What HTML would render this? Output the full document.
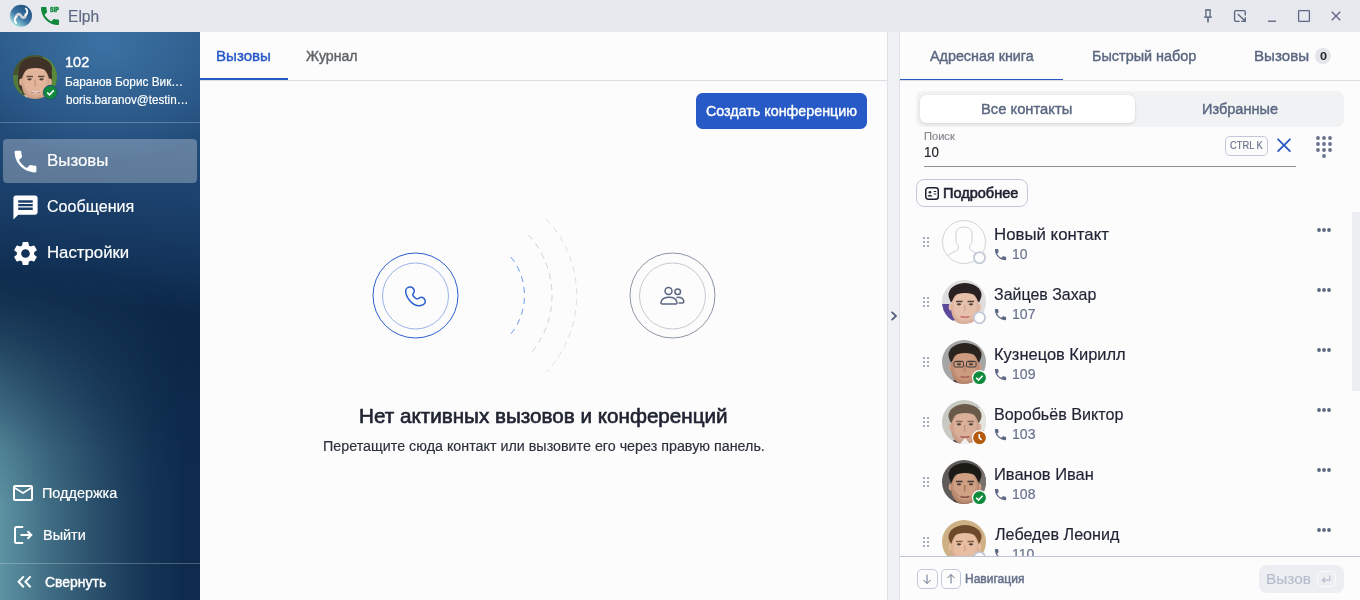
<!DOCTYPE html>
<html lang="ru">
<head>
<meta charset="utf-8">
<title>Elph</title>
<style>
*{box-sizing:border-box;margin:0;padding:0}
html,body{width:1360px;height:600px;overflow:hidden;background:#fcfcfc;font-family:"Liberation Sans",sans-serif;color:#22252b}
.a{position:absolute}
.t{position:absolute;white-space:nowrap;line-height:1;transform-origin:0 50%}
#titlebar{position:absolute;left:0;top:0;width:1360px;height:32px;background:#e8e9ee}
#sidebar{position:absolute;left:0;top:32px;width:200px;height:568px;overflow:hidden;
background:
radial-gradient(ellipse 150px 120px at 105px 10px, rgba(60,115,165,.95), rgba(60,115,165,0) 100%),
linear-gradient(186deg,#2a5886 0%,#214a78 21%,#173a63 35%,#0c2849 48%,#0c2849 56%,#0e2b4e 75%,#0e2b4e 100%)}
#main{position:absolute;left:200px;top:32px;width:687px;height:568px;background:#fcfcfc}
#split{position:absolute;left:887px;top:32px;width:13px;height:568px;background:#f0f1f4;border-left:1px solid #dfe1e9;border-right:1px solid #dfe1e9}
#right{position:absolute;left:900px;top:32px;width:460px;height:568px;background:#fcfcfd}
#list{position:absolute;left:900px;top:208px;width:460px;height:348px;overflow:hidden}
#glow{position:absolute;left:0;top:32px;width:200px;height:568px;background:linear-gradient(90deg,rgba(100,156,170,.92) 0,rgba(100,156,170,.58) 50px,rgba(100,156,170,.3) 100px,rgba(100,156,170,.08) 150px,rgba(100,156,170,0) 185px);-webkit-mask-image:linear-gradient(180deg,transparent 240px,rgba(0,0,0,.1) 270px,rgba(0,0,0,.25) 308px,rgba(0,0,0,.55) 368px,rgba(0,0,0,.84) 418px,#000 475px);mask-image:linear-gradient(180deg,transparent 240px,rgba(0,0,0,.1) 270px,rgba(0,0,0,.25) 308px,rgba(0,0,0,.55) 368px,rgba(0,0,0,.84) 418px,#000 475px)}
.sep{position:absolute;left:0;width:200px;height:1px;background:rgba(255,255,255,.24)}
.kb{position:absolute;border:1px solid #c3c9d9;border-radius:5px}
</style>
</head>
<body>
<div id="titlebar"></div>
<div id="sidebar"></div>
<div id="main"></div>
<div id="split"></div>
<div id="right"></div>
<svg class="a" style="left:9px;top:4px" width="24" height="24" viewBox="0 0 24 24" ><defs><linearGradient id="lg" x1="0.85" y1="0.1" x2="0.2" y2="0.95"><stop offset="0" stop-color="#1f4f80"/><stop offset=".55" stop-color="#3d76a4"/><stop offset="1" stop-color="#a6e6e4"/></linearGradient></defs>
<circle cx="12" cy="11.800" r="11" fill="url(#lg)"/>
<path d="M7.300 12.900C8 9.300 11 9.300 12 11.800S16 14.500 16.700 10.700" fill="none" stroke="#cdd3d9" stroke-width="2.700" stroke-linecap="round"/>
<path d="M16.900 4.600C18.700 6.200 18.900 9 16.800 10.900" fill="none" stroke="#fff" stroke-width="1.900" stroke-linecap="round"/>
<path d="M7.100 19C5.300 17.400 5.100 14.600 7.200 12.700" fill="none" stroke="#fff" stroke-width="1.900" stroke-linecap="round"/></svg>
<svg class="a" style="left:37.8px;top:4px" width="24" height="24" viewBox="0 0 24 24" ><path d="M6.620 10.790c1.440 2.830 3.760 5.140 6.590 6.590l2.200-2.200c.27-.27.670-.36 1.020-.24 1.120.37 2.330.57 3.570.57.550 0 1 .45 1 1V20c0 .550-.45 1-1 1-9.390 0-17-7.610-17-17 0-.55.450-1 1-1h3.500c.55 0 1 .45 1 1 0 1.250.200 2.450.57 3.570.110.350.030.740-.25 1.020l-2.200 2.200z" fill="#0f8a3c"/></svg>
<svg class="a" style="left:1200px;top:8px" width="16" height="16" viewBox="0 0 16 16" fill="none" stroke="#5b6780" stroke-width="1.300"><path d="M5.100 2H10.900" stroke-width="1.600"/><path d="M5.900 2.500V8.300M10.100 2.500V8.300" stroke-width="1.300"/><path d="M4.200 9.100H11.800" stroke-width="1.600"/><path d="M8 10V14.400" stroke-width="1.600"/></svg>
<svg class="a" style="left:1232px;top:8px" width="16" height="16" viewBox="0 0 16 16" fill="none" stroke="#5b6780" stroke-width="1.300"><path d="M13.300 7.600V3.900c0-.7-.6-1.300-1.300-1.300H3.900c-.7 0-1.300.6-1.300 1.300v8.100c0 .7.600 1.300 1.300 1.300H7.700M9.200 13.300H13.300V9.200M5.800 5.900L13.100 13.100" stroke-width="1.350"/></svg>
<svg class="a" style="left:1264px;top:8px" width="16" height="16" viewBox="0 0 16 16" fill="none" stroke="#5b6780" stroke-width="1.300"><path d="M4 13.200h8" stroke-width="1.400"/></svg>
<svg class="a" style="left:1296px;top:8px" width="16" height="16" viewBox="0 0 16 16" fill="none" stroke="#5b6780" stroke-width="1.300"><rect x="2.600" y="2.600" width="10.800" height="10.800" rx=".6"/></svg>
<svg class="a" style="left:1328px;top:8px" width="16" height="16" viewBox="0 0 16 16" fill="none" stroke="#5b6780" stroke-width="1.300"><path d="M3.800 3.800l8.400 8.400M12.200 3.800l-8.400 8.400"/></svg>
<div id="glow"></div>
<svg class="a" style="left:13px;top:55px" width="46" height="46" viewBox="0 0 46 46" ><defs><clipPath id="c0"><circle cx="22" cy="22" r="22"/></clipPath><filter id="f0" x="-10%" y="-10%" width="120%" height="120%"><feGaussianBlur stdDeviation=".75"/></filter><radialGradient id="g0" cx=".5" cy=".42" r=".62"><stop offset="0" stop-color="#e2b59b"/><stop offset=".6" stop-color="#e2b59b"/><stop offset="1" stop-color="#c08f78"/></radialGradient></defs>
<g clip-path="url(#c0)"><rect width="44" height="44" fill="#47552f"/><g filter="url(#f0)"><rect x="30" y="2" width="14" height="36" fill="#5b8a3c"/><rect x="0" y="20" width="9" height="24" fill="#557a3c"/><ellipse cx="9.500" cy="24" rx="4.500" ry="12" fill="#3f3026"/><ellipse cx="35" cy="22" rx="4" ry="11" fill="#3f3026"/>
<path d="M3.5 50c1-8 7-11 19-11s18 3 19 11z" fill="#d9d6cf"/>
<rect x="17.0" y="34" width="11" height="9" fill="#c08f78"/>
<ellipse cx="22.5" cy="14.0" rx="16.500" ry="12" fill="#3f3026"/>
<ellipse cx="8.2" cy="27" rx="2" ry="3.400" fill="#e2b59b"/><ellipse cx="36.8" cy="27" rx="2" ry="3.400" fill="#e2b59b"/>
<ellipse cx="22.5" cy="28" rx="14" ry="17.500" fill="url(#g0)"/>
<path d="M7.5 23c0-10 6.500-16 15-16s15 6 15 16c-2.500-6.500-5-10-15-10s-12.500 3.500-15 10z" fill="#3f3026"/>
<path d="M13.5 21.500h6.500M25.0 21.500h6.500" stroke="#3f3026" stroke-width="1.300" opacity=".8"/>
<ellipse cx="16.5" cy="24.300" rx="2.200" ry="1.100" fill="#3a2c26" opacity=".85"/><ellipse cx="28.5" cy="24.300" rx="2.200" ry="1.100" fill="#3a2c26" opacity=".85"/>
<path d="M22.2 25v6.500" stroke="#c08f78" stroke-width="1.600" opacity=".7"/>
<path d="M18.0 36.500c2.800 1 6.200 1 9 0" stroke="#a85c50" stroke-width="1.600" fill="none"/><path d="M17 35.800c3 2.600 8 2.600 11 0-3 .8-8 .8-11 0z" fill="#fff"/></g></g><circle cx="37.400" cy="37.400" r="7" fill="#0f8a3c" stroke="#234f7a" stroke-width="1"/>
<path d="M34.200 37.500l2.300 2.300 4.200-4.400" stroke="#fff" stroke-width="1.600" fill="none"/></svg>
<div class="sep" style="top:122px"></div>
<div class="a" style="left:3px;top:139px;width:194px;height:44px;border-radius:4px;background:rgba(255,255,255,.29)"></div>
<svg class="a" style="left:10.5px;top:146.5px" width="29" height="29" viewBox="0 0 24 24" ><path d="M6.620 10.790c1.440 2.830 3.760 5.140 6.590 6.590l2.200-2.200c.27-.27.670-.36 1.020-.24 1.120.37 2.330.57 3.570.57.550 0 1 .45 1 1V20c0 .550-.45 1-1 1-9.390 0-17-7.610-17-17 0-.55.450-1 1-1h3.500c.55 0 1 .45 1 1 0 1.250.200 2.450.57 3.570.110.350.030.740-.25 1.020l-2.200 2.200z" fill="#fff"/></svg>
<svg class="a" style="left:10.5px;top:192.5px" width="29" height="29" viewBox="0 0 24 24" ><path d="M20 2H4c-1.100 0-1.990.9-1.990 2L2 22l4-4h14c1.100 0 2-.9 2-2V4c0-1.100-.9-2-2-2zM6 9h12v2H6V9zm12 5H6v-2h12v2zm0-6H6V6h12v2z" fill="#fff"/></svg>
<svg class="a" style="left:10.5px;top:238.7px" width="29" height="29" viewBox="0 0 24 24" ><path d="M19.140 12.940c.04-.3.060-.61.060-.94 0-.32-.02-.64-.07-.94l2.030-1.580c.18-.14.230-.41.120-.61l-1.920-3.320c-.12-.22-.37-.29-.59-.22l-2.390.96c-.5-.38-1.030-.7-1.620-.94l-.36-2.540c-.04-.24-.24-.41-.48-.41h-3.840c-.24 0-.43.170-.47.410l-.36 2.540c-.59.240-1.130.57-1.620.94l-2.390-.96c-.22-.08-.47 0-.59.220L2.740 8.870c-.12.210-.08.470.12.610l2.030 1.580c-.05.300-.09.630-.09.940s.02.640.07.940l-2.030 1.580c-.18.140-.23.410-.12.610l1.920 3.320c.12.220.37.290.59.220l2.390-.96c.5.380 1.030.7 1.620.94l.36 2.540c.05.240.24.410.48.410h3.840c.24 0 .44-.17.470-.41l.36-2.540c.59-.24 1.130-.56 1.620-.94l2.390.96c.22.080.47 0 .59-.22l1.920-3.320c.12-.22.070-.47-.12-.61l-2.010-1.580zM12 15.600c-1.980 0-3.600-1.620-3.600-3.600s1.620-3.600 3.600-3.600 3.600 1.620 3.600 3.600-1.620 3.600-3.600 3.600z" fill="#fff"/></svg>
<svg class="a" style="left:11px;top:481px" width="24" height="24" viewBox="0 0 24 24" ><path d="M20 4H4c-1.100 0-1.990.9-1.990 2L2 18c0 1.100.9 2 2 2h16c1.100 0 2-.9 2-2V6c0-1.100-.9-2-2-2zm0 14H4V8l8 5 8-5v10zm-8-7L4 6h16l-8 5z" fill="#fff"/></svg>
<svg class="a" style="left:12px;top:524px" width="22" height="22" viewBox="0 0 22 22" fill="none" stroke="#fff" stroke-width="2"><path d="M11.200 3H4.500C3.700 3 3 3.700 3 4.500v13c0 .8.700 1.500 1.500 1.500h6.700M8.500 11h10.500M15.500 7.200l3.800 3.800-3.800 3.800"/></svg>
<div class="sep" style="top:563px"></div>
<svg class="a" style="left:15px;top:572px" width="20" height="20" viewBox="0 0 20 20" fill="none" stroke="#fff" stroke-width="2"><path d="M8.800 4.400L3.600 9.800l5.200 5.400M15.600 4.400l-5.200 5.400 5.200 5.400"/></svg>
<div class="a" style="left:200px;top:80px;width:687px;height:1px;background:#dcdee3"></div>
<div class="a" style="left:200px;top:78px;width:88px;height:2px;background:#2759c7"></div>
<div class="a" style="left:696px;top:93px;width:171px;height:36px;border-radius:6.500px;background:#2759c7"></div>
<svg class="a" style="left:340px;top:202px" width="420" height="190" viewBox="340 202 420 190" fill="none"><circle cx="415.500" cy="295.500" r="42.500" stroke="#2a5fd0" stroke-width="1"/>
<circle cx="415.500" cy="296" r="33" stroke="#9bb4ea" stroke-width="1"/>
<path d="M410.300 287C412 287 414.300 288.500 414.300 291C414.300 292.500 413 293.300 412.800 294.800C412.700 296 414.500 297.600 416.800 298.900C417.800 299.400 418.800 297.800 420.500 297.400C423 297 425.300 299 425.300 301.700C425.300 304 422 305.800 418.300 305.700C412 305.500 405.700 297 405.700 291C405.700 288.500 408 287 410.300 287Z" stroke="#2a5fd0" stroke-width="1.500" stroke-linejoin="round"/>
<path d="M510.800 257a61 61 0 0 1 0 77" stroke="#6b9af0" stroke-width="1" stroke-dasharray="6 5"/>
<path d="M528.500 235a89.500 89.500 0 0 1 0 121" stroke="#cfd2d8" stroke-width="1" stroke-dasharray="6 5"/>
<path d="M546.300 219a111.500 111.500 0 0 1 0 153" stroke="#dddfe3" stroke-width="1" stroke-dasharray="6 5"/>
<circle cx="672.500" cy="295.500" r="42.500" stroke="#8c95a6" stroke-width="1"/>
<circle cx="672.500" cy="296" r="33" stroke="#c5cad3" stroke-width="1"/>
<g stroke="#5b6780" stroke-width="1.500" stroke-linejoin="round">
<circle cx="668.500" cy="291" r="3.500"/>
<path d="M662.300 304C661.100 304 660.700 303 661.100 301.800C662.100 298.500 665 297.300 669 297.300S675.900 298.500 676.900 301.800C677.300 303 676.900 304 675.700 304Z"/>
<circle cx="677.700" cy="291.800" r="2.800"/>
<path d="M676.300 297.600C676.900 297.400 677.500 297.300 678.100 297.300C681 297.300 683.200 298.800 683.800 301.200C684 302.300 683.300 303 682.400 303H678.600"/>
</g></svg>
<svg class="a" style="left:888px;top:309px" width="12" height="14" viewBox="0 0 12 14" fill="none" stroke="#56627b" stroke-width="1.800"><path d="M3.600 2.800L8 7l-4.400 4.200"/></svg>
<div class="a" style="left:900px;top:80px;width:460px;height:1px;background:#dcdee3"></div>
<div class="a" style="left:900px;top:78.500px;width:163px;height:1.500px;background:#2759c7"></div>
<div class="a" style="left:1315px;top:48px;width:16px;height:16px;border-radius:8px;background:#e3e5ea"></div>
<div class="a" style="left:916px;top:91px;width:428px;height:36px;border-radius:7px;background:#f1f2f4"></div>
<div class="a" style="left:920px;top:95px;width:215px;height:28px;border-radius:6px;background:#fff;box-shadow:0 1px 3px rgba(0,0,0,.13),0 0 1px rgba(0,0,0,.08)"></div>
<div class="a" style="left:924px;top:166px;width:372px;height:1px;background:#8b8e94"></div>
<div class="a" style="left:1225px;top:136px;width:43px;height:19.500px;border:1px solid #c3c9d9;border-radius:5px"></div>
<svg class="a" style="left:1276px;top:137px" width="16" height="16" viewBox="0 0 16 16" fill="none" stroke="#2759c7" stroke-width="1.800"><path d="M1.600 1.800l12.800 12.800M14.400 1.800L1.600 14.600"/></svg>
<svg class="a" style="left:1316px;top:136px" width="16" height="22" viewBox="0 0 16 22" fill="#66728a"><circle cx="2" cy="2" r="1.900"/><circle cx="2" cy="8" r="1.900"/><circle cx="2" cy="14" r="1.900"/><circle cx="8" cy="2" r="1.900"/><circle cx="8" cy="8" r="1.900"/><circle cx="8" cy="14" r="1.900"/><circle cx="14" cy="2" r="1.900"/><circle cx="14" cy="8" r="1.900"/><circle cx="14" cy="14" r="1.900"/><circle cx="8" cy="20" r="1.900"/></svg>
<div class="a" style="left:916px;top:179px;width:112px;height:28px;border:1px solid #c3c9d9;border-radius:8px"></div>
<svg class="a" style="left:924px;top:186px" width="16" height="15" viewBox="0 0 16 15" fill="none" stroke="#1e2230" stroke-width="1.500"><rect x="1.750" y="1.750" width="12.500" height="11.500" rx="2.500"/><circle cx="6" cy="6.300" r="1.300" fill="#1e2230" stroke="none"/><path d="M3.600 10.400c.5-1.900 4.300-1.900 4.800 0z" fill="#1e2230" stroke="none"/><path d="M9.800 5.500h2.400M9.800 8h2.400" stroke-width="1.200"/></svg>
<div class="a" style="left:1352px;top:212px;width:8px;height:179px;background:#edeef1"></div>
<div id="list"><svg class="a" style="left:23px;top:29px" width="6" height="10" viewBox="0 0 6 10" fill="#a2aaba"><rect x="0" y="0" width="2" height="2" rx=".3"/><rect x="0" y="4" width="2" height="2" rx=".3"/><rect x="0" y="8" width="2" height="2" rx=".3"/><rect x="4" y="0" width="2" height="2" rx=".3"/><rect x="4" y="4" width="2" height="2" rx=".3"/><rect x="4" y="8" width="2" height="2" rx=".3"/></svg>
<svg class="a" style="left:42px;top:12px" width="46" height="46" viewBox="0 0 46 46" ><circle cx="22" cy="22" r="21.500" fill="#fdfdfd" stroke="#cdced2" stroke-width=".9"/>
<path d="M22 7C17.500 7 14 9.500 14 13V21C14 23 15.500 24 16.300 25V28.500C16.300 29.500 15.800 30 14.500 30.500L5.500 35.500M22 7C26.500 7 30 9.500 30 13V21C30 23 28.500 24 27.700 25V28.500C27.700 29.500 28.200 30 29.500 30.500L38.500 35.500" fill="none" stroke="#c9cace" stroke-width=".9"/><circle cx="37.5" cy="37.7" r="5.600" fill="#fcfcfd" stroke="#c3c9d6" stroke-width="1.800"/></svg>
<svg class="a" style="left:93.4px;top:38.8px" width="15" height="15" viewBox="0 0 24 24" ><path d="M6.620 10.790c1.440 2.830 3.760 5.140 6.590 6.590l2.200-2.200c.27-.27.670-.36 1.020-.24 1.120.37 2.330.57 3.570.57.550 0 1 .45 1 1V20c0 .550-.45 1-1 1-9.390 0-17-7.610-17-17 0-.55.450-1 1-1h3.500c.55 0 1 .45 1 1 0 1.250.200 2.450.57 3.570.110.350.030.740-.25 1.020l-2.200 2.200z" fill="#5f6b82"/></svg>
<svg class="a" style="left:417px;top:20px" width="14" height="4" viewBox="0 0 14 4" fill="#5b6780"><circle cx="2" cy="2" r="1.900"/><circle cx="7" cy="2" r="1.900"/><circle cx="12" cy="2" r="1.900"/></svg>
<svg class="a" style="left:23px;top:89px" width="6" height="10" viewBox="0 0 6 10" fill="#a2aaba"><rect x="0" y="0" width="2" height="2" rx=".3"/><rect x="0" y="4" width="2" height="2" rx=".3"/><rect x="0" y="8" width="2" height="2" rx=".3"/><rect x="4" y="0" width="2" height="2" rx=".3"/><rect x="4" y="4" width="2" height="2" rx=".3"/><rect x="4" y="8" width="2" height="2" rx=".3"/></svg>
<svg class="a" style="left:42px;top:72px" width="46" height="46" viewBox="0 0 46 46" ><defs><clipPath id="c1"><circle cx="22" cy="22" r="22"/></clipPath><filter id="f1" x="-10%" y="-10%" width="120%" height="120%"><feGaussianBlur stdDeviation=".75"/></filter><radialGradient id="g1" cx=".5" cy=".42" r=".62"><stop offset="0" stop-color="#e7c1ac"/><stop offset=".6" stop-color="#e7c1ac"/><stop offset="1" stop-color="#cf9f8b"/></radialGradient></defs>
<g clip-path="url(#c1)"><rect width="44" height="44" fill="#dededf"/><g filter="url(#f1)"><path d="M0 24h16v20H0z" fill="#5b4a9a"/>
<path d="M4 50c1-8 7-11 19-11s18 3 19 11z" fill="#e6dfe2"/>
<rect x="17.5" y="34" width="11" height="9" fill="#cf9f8b"/>
<ellipse cx="23" cy="15.0" rx="16.500" ry="12" fill="#2b2020"/>
<ellipse cx="8.7" cy="27" rx="2" ry="3.400" fill="#e7c1ac"/><ellipse cx="37.3" cy="27" rx="2" ry="3.400" fill="#e7c1ac"/>
<ellipse cx="23" cy="28" rx="14" ry="17.500" fill="url(#g1)"/>
<path d="M8 23c0-10 6.500-16 15-16s15 6 15 16c-2.500-6.500-5-10-15-10s-12.500 3.500-15 10z" fill="#2b2020"/>
<path d="M14 21.500h6.500M25.5 21.500h6.500" stroke="#2b2020" stroke-width="1.300" opacity=".8"/>
<ellipse cx="17" cy="24.300" rx="2.200" ry="1.100" fill="#3a2c26" opacity=".85"/><ellipse cx="29" cy="24.300" rx="2.200" ry="1.100" fill="#3a2c26" opacity=".85"/>
<path d="M22.7 25v6.500" stroke="#cf9f8b" stroke-width="1.600" opacity=".7"/>
<path d="M18.5 36.500c2.800 1 6.200 1 9 0" stroke="#c9756e" stroke-width="1.600" fill="none"/></g></g><circle cx="37.5" cy="37.7" r="5.600" fill="#fcfcfd" stroke="#c3c9d6" stroke-width="1.800"/></svg>
<svg class="a" style="left:93.4px;top:98.8px" width="15" height="15" viewBox="0 0 24 24" ><path d="M6.620 10.790c1.440 2.830 3.760 5.140 6.590 6.590l2.200-2.200c.27-.27.670-.36 1.020-.24 1.120.37 2.330.57 3.570.57.550 0 1 .45 1 1V20c0 .550-.45 1-1 1-9.390 0-17-7.610-17-17 0-.55.450-1 1-1h3.500c.55 0 1 .45 1 1 0 1.250.200 2.450.57 3.570.110.350.030.740-.25 1.020l-2.200 2.200z" fill="#5f6b82"/></svg>
<svg class="a" style="left:417px;top:80px" width="14" height="4" viewBox="0 0 14 4" fill="#5b6780"><circle cx="2" cy="2" r="1.900"/><circle cx="7" cy="2" r="1.900"/><circle cx="12" cy="2" r="1.900"/></svg>
<svg class="a" style="left:23px;top:149px" width="6" height="10" viewBox="0 0 6 10" fill="#a2aaba"><rect x="0" y="0" width="2" height="2" rx=".3"/><rect x="0" y="4" width="2" height="2" rx=".3"/><rect x="0" y="8" width="2" height="2" rx=".3"/><rect x="4" y="0" width="2" height="2" rx=".3"/><rect x="4" y="4" width="2" height="2" rx=".3"/><rect x="4" y="8" width="2" height="2" rx=".3"/></svg>
<svg class="a" style="left:42px;top:132px" width="46" height="46" viewBox="0 0 46 46" ><defs><clipPath id="c2"><circle cx="22" cy="22" r="22"/></clipPath><filter id="f2" x="-10%" y="-10%" width="120%" height="120%"><feGaussianBlur stdDeviation=".75"/></filter><radialGradient id="g2" cx=".5" cy=".42" r=".62"><stop offset="0" stop-color="#cc9a7f"/><stop offset=".6" stop-color="#cc9a7f"/><stop offset="1" stop-color="#a9745c"/></radialGradient></defs>
<g clip-path="url(#c2)"><rect width="44" height="44" fill="#a5a5a5"/><g filter="url(#f2)">
<path d="M4 50c1-8 7-11 19-11s18 3 19 11z" fill="#252525"/>
<rect x="17.5" y="34" width="11" height="9" fill="#a9745c"/>
<ellipse cx="23" cy="15.0" rx="16.500" ry="12" fill="#2a211c"/>
<ellipse cx="8.7" cy="27" rx="2" ry="3.400" fill="#cc9a7f"/><ellipse cx="37.3" cy="27" rx="2" ry="3.400" fill="#cc9a7f"/>
<ellipse cx="23" cy="28" rx="14" ry="17.500" fill="url(#g2)"/>
<path d="M8 23c0-10 6.500-16 15-16s15 6 15 16c-2.500-6.500-5-10-15-10s-12.500 3.500-15 10z" fill="#2a211c"/>
<path d="M14 21.500h6.500M25.5 21.500h6.500" stroke="#2a211c" stroke-width="1.300" opacity=".8"/>
<ellipse cx="17" cy="24.300" rx="2.200" ry="1.100" fill="#3a2c26" opacity=".85"/><ellipse cx="29" cy="24.300" rx="2.200" ry="1.100" fill="#3a2c26" opacity=".85"/>
<path d="M22.7 25v6.500" stroke="#a9745c" stroke-width="1.600" opacity=".7"/>
<path d="M18.5 36.500c2.800 1 6.200 1 9 0" stroke="#a86558" stroke-width="1.600" fill="none"/><rect x="12" y="21.500" width="9.500" height="5.500" rx="1" fill="none" stroke="#3a3a3a" stroke-width="1"/><rect x="24.500" y="21.500" width="9.500" height="5.500" rx="1" fill="none" stroke="#3a3a3a" stroke-width="1"/></g></g><circle cx="37.5" cy="37.7" r="7" fill="#0f8a3c" stroke="#fcfcfd" stroke-width="1.200"/><path d="M34.2 37.800000000000004l2.300 2.300 4.200-4.400" stroke="#fff" stroke-width="1.600" fill="none"/></svg>
<svg class="a" style="left:93.4px;top:158.8px" width="15" height="15" viewBox="0 0 24 24" ><path d="M6.620 10.790c1.440 2.830 3.760 5.140 6.590 6.590l2.200-2.200c.27-.27.670-.36 1.020-.24 1.120.37 2.330.57 3.570.57.550 0 1 .45 1 1V20c0 .550-.45 1-1 1-9.390 0-17-7.610-17-17 0-.55.450-1 1-1h3.500c.55 0 1 .45 1 1 0 1.250.200 2.450.57 3.570.110.350.030.740-.25 1.020l-2.200 2.200z" fill="#5f6b82"/></svg>
<svg class="a" style="left:417px;top:140px" width="14" height="4" viewBox="0 0 14 4" fill="#5b6780"><circle cx="2" cy="2" r="1.900"/><circle cx="7" cy="2" r="1.900"/><circle cx="12" cy="2" r="1.900"/></svg>
<svg class="a" style="left:23px;top:209px" width="6" height="10" viewBox="0 0 6 10" fill="#a2aaba"><rect x="0" y="0" width="2" height="2" rx=".3"/><rect x="0" y="4" width="2" height="2" rx=".3"/><rect x="0" y="8" width="2" height="2" rx=".3"/><rect x="4" y="0" width="2" height="2" rx=".3"/><rect x="4" y="4" width="2" height="2" rx=".3"/><rect x="4" y="8" width="2" height="2" rx=".3"/></svg>
<svg class="a" style="left:42px;top:192px" width="46" height="46" viewBox="0 0 46 46" ><defs><clipPath id="c3"><circle cx="22" cy="22" r="22"/></clipPath><filter id="f3" x="-10%" y="-10%" width="120%" height="120%"><feGaussianBlur stdDeviation=".75"/></filter><radialGradient id="g3" cx=".5" cy=".42" r=".62"><stop offset="0" stop-color="#dab09a"/><stop offset=".6" stop-color="#dab09a"/><stop offset="1" stop-color="#b98c76"/></radialGradient></defs>
<g clip-path="url(#c3)"><rect width="44" height="44" fill="#c9c9c3"/><g filter="url(#f3)"><rect x="34" y="8" width="10" height="22" fill="#e4e4df"/>
<path d="M4 50c1-8 7-11 19-11s18 3 19 11z" fill="#2d3440"/>
<rect x="17.5" y="34" width="11" height="9" fill="#b98c76"/>
<ellipse cx="23" cy="16.0" rx="16.500" ry="12" fill="#6b5a48"/>
<ellipse cx="8.7" cy="27" rx="2" ry="3.400" fill="#dab09a"/><ellipse cx="37.3" cy="27" rx="2" ry="3.400" fill="#dab09a"/>
<ellipse cx="23" cy="28" rx="14" ry="17.500" fill="url(#g3)"/>
<path d="M8 23c0-10 6.500-16 15-16s15 6 15 16c-2.500-6.500-5-10-15-10s-12.500 3.500-15 10z" fill="#6b5a48"/>
<path d="M14 21.500h6.500M25.5 21.500h6.500" stroke="#6b5a48" stroke-width="1.300" opacity=".8"/>
<ellipse cx="17" cy="24.300" rx="2.200" ry="1.100" fill="#3a2c26" opacity=".85"/><ellipse cx="29" cy="24.300" rx="2.200" ry="1.100" fill="#3a2c26" opacity=".85"/>
<path d="M22.7 25v6.500" stroke="#b98c76" stroke-width="1.600" opacity=".7"/>
<path d="M18.5 36.500c2.800 1 6.200 1 9 0" stroke="#a9645a" stroke-width="1.600" fill="none"/><path d="M18 44l5-6 5 6z" fill="#f2f2f2"/></g></g><circle cx="37.5" cy="37.7" r="7" fill="#b35a0c" stroke="#fcfcfd" stroke-width="1.200"/><path d="M37.3 34.1v3.800l2.300 2" stroke="#fff" stroke-width="1.500" fill="none"/></svg>
<svg class="a" style="left:93.4px;top:218.8px" width="15" height="15" viewBox="0 0 24 24" ><path d="M6.620 10.790c1.440 2.830 3.760 5.140 6.590 6.590l2.200-2.200c.27-.27.670-.36 1.020-.24 1.120.37 2.330.57 3.570.57.550 0 1 .45 1 1V20c0 .550-.45 1-1 1-9.390 0-17-7.610-17-17 0-.55.450-1 1-1h3.500c.55 0 1 .45 1 1 0 1.250.200 2.450.57 3.570.110.350.030.740-.25 1.020l-2.200 2.200z" fill="#5f6b82"/></svg>
<svg class="a" style="left:417px;top:200px" width="14" height="4" viewBox="0 0 14 4" fill="#5b6780"><circle cx="2" cy="2" r="1.900"/><circle cx="7" cy="2" r="1.900"/><circle cx="12" cy="2" r="1.900"/></svg>
<svg class="a" style="left:23px;top:269px" width="6" height="10" viewBox="0 0 6 10" fill="#a2aaba"><rect x="0" y="0" width="2" height="2" rx=".3"/><rect x="0" y="4" width="2" height="2" rx=".3"/><rect x="0" y="8" width="2" height="2" rx=".3"/><rect x="4" y="0" width="2" height="2" rx=".3"/><rect x="4" y="4" width="2" height="2" rx=".3"/><rect x="4" y="8" width="2" height="2" rx=".3"/></svg>
<svg class="a" style="left:42px;top:252px" width="46" height="46" viewBox="0 0 46 46" ><defs><clipPath id="c4"><circle cx="22" cy="22" r="22"/></clipPath><filter id="f4" x="-10%" y="-10%" width="120%" height="120%"><feGaussianBlur stdDeviation=".75"/></filter><radialGradient id="g4" cx=".5" cy=".42" r=".62"><stop offset="0" stop-color="#d0a085"/><stop offset=".6" stop-color="#d0a085"/><stop offset="1" stop-color="#96694f"/></radialGradient></defs>
<g clip-path="url(#c4)"><rect width="44" height="44" fill="#5f5b58"/><g filter="url(#f4)"><rect x="30" y="6" width="14" height="26" fill="#77726d"/>
<path d="M4 50c1-8 7-11 19-11s18 3 19 11z" fill="#2f2c2a"/>
<rect x="17.5" y="34" width="11" height="9" fill="#96694f"/>
<ellipse cx="23" cy="15.0" rx="16.500" ry="12" fill="#1c1a19"/>
<ellipse cx="8.7" cy="27" rx="2" ry="3.400" fill="#d0a085"/><ellipse cx="37.3" cy="27" rx="2" ry="3.400" fill="#d0a085"/>
<ellipse cx="23" cy="28" rx="14" ry="17.500" fill="url(#g4)"/>
<path d="M8 23c0-10 6.500-16 15-16s15 6 15 16c-2.500-6.500-5-10-15-10s-12.500 3.500-15 10z" fill="#1c1a19"/>
<path d="M14 21.500h6.500M25.5 21.500h6.500" stroke="#1c1a19" stroke-width="1.300" opacity=".8"/>
<ellipse cx="17" cy="24.300" rx="2.200" ry="1.100" fill="#3a2c26" opacity=".85"/><ellipse cx="29" cy="24.300" rx="2.200" ry="1.100" fill="#3a2c26" opacity=".85"/>
<path d="M22.7 25v6.500" stroke="#96694f" stroke-width="1.600" opacity=".7"/>
<path d="M18.5 36.500c2.800 1 6.200 1 9 0" stroke="#8f5648" stroke-width="1.600" fill="none"/><path d="M12 30c2 10 20 10 22 0-2 4-6 7.500-11 7.500s-9-3.500-11-7.500z" fill="#6b4636" opacity=".4"/></g></g><circle cx="37.5" cy="37.7" r="7" fill="#0f8a3c" stroke="#fcfcfd" stroke-width="1.200"/><path d="M34.2 37.800000000000004l2.300 2.300 4.200-4.400" stroke="#fff" stroke-width="1.600" fill="none"/></svg>
<svg class="a" style="left:93.4px;top:278.8px" width="15" height="15" viewBox="0 0 24 24" ><path d="M6.620 10.790c1.440 2.830 3.760 5.140 6.590 6.590l2.200-2.200c.27-.27.670-.36 1.020-.24 1.120.37 2.330.57 3.570.57.550 0 1 .45 1 1V20c0 .550-.45 1-1 1-9.390 0-17-7.610-17-17 0-.55.450-1 1-1h3.500c.55 0 1 .45 1 1 0 1.250.200 2.450.57 3.570.110.350.030.740-.25 1.020l-2.200 2.200z" fill="#5f6b82"/></svg>
<svg class="a" style="left:417px;top:260px" width="14" height="4" viewBox="0 0 14 4" fill="#5b6780"><circle cx="2" cy="2" r="1.900"/><circle cx="7" cy="2" r="1.900"/><circle cx="12" cy="2" r="1.900"/></svg>
<svg class="a" style="left:23px;top:329px" width="6" height="10" viewBox="0 0 6 10" fill="#a2aaba"><rect x="0" y="0" width="2" height="2" rx=".3"/><rect x="0" y="4" width="2" height="2" rx=".3"/><rect x="0" y="8" width="2" height="2" rx=".3"/><rect x="4" y="0" width="2" height="2" rx=".3"/><rect x="4" y="4" width="2" height="2" rx=".3"/><rect x="4" y="8" width="2" height="2" rx=".3"/></svg>
<svg class="a" style="left:42px;top:312px" width="46" height="46" viewBox="0 0 46 46" ><defs><clipPath id="c5"><circle cx="22" cy="22" r="22"/></clipPath><filter id="f5" x="-10%" y="-10%" width="120%" height="120%"><feGaussianBlur stdDeviation=".75"/></filter><radialGradient id="g5" cx=".5" cy=".42" r=".62"><stop offset="0" stop-color="#e8bea3"/><stop offset=".6" stop-color="#e8bea3"/><stop offset="1" stop-color="#cf9d80"/></radialGradient></defs>
<g clip-path="url(#c5)"><rect width="44" height="44" fill="#cdb083"/><g filter="url(#f5)">
<path d="M4 50c1-8 7-11 19-11s18 3 19 11z" fill="#c9a97c"/>
<rect x="17.5" y="34" width="11" height="9" fill="#cf9d80"/>
<ellipse cx="23" cy="17.0" rx="16.500" ry="12" fill="#6e4a2c"/>
<ellipse cx="8.7" cy="27" rx="2" ry="3.400" fill="#e8bea3"/><ellipse cx="37.3" cy="27" rx="2" ry="3.400" fill="#e8bea3"/>
<ellipse cx="23" cy="28" rx="14" ry="17.500" fill="url(#g5)"/>
<path d="M8 23c0-10 6.500-16 15-16s15 6 15 16c-2.500-6.500-5-10-15-10s-12.500 3.500-15 10z" fill="#6e4a2c"/>
<path d="M14 21.500h6.500M25.5 21.500h6.500" stroke="#6e4a2c" stroke-width="1.300" opacity=".8"/>
<ellipse cx="17" cy="24.300" rx="2.200" ry="1.100" fill="#3a2c26" opacity=".85"/><ellipse cx="29" cy="24.300" rx="2.200" ry="1.100" fill="#3a2c26" opacity=".85"/>
<path d="M22.7 25v6.500" stroke="#cf9d80" stroke-width="1.600" opacity=".7"/>
<path d="M18.5 36.500c2.800 1 6.200 1 9 0" stroke="#c0776a" stroke-width="1.600" fill="none"/></g></g><circle cx="37.5" cy="37.7" r="5.600" fill="#fcfcfd" stroke="#c3c9d6" stroke-width="1.800"/></svg>
<svg class="a" style="left:93.4px;top:338.8px" width="15" height="15" viewBox="0 0 24 24" ><path d="M6.620 10.790c1.440 2.830 3.760 5.140 6.590 6.590l2.200-2.200c.27-.27.670-.36 1.020-.24 1.120.37 2.330.57 3.570.57.550 0 1 .45 1 1V20c0 .550-.45 1-1 1-9.390 0-17-7.610-17-17 0-.55.450-1 1-1h3.500c.55 0 1 .45 1 1 0 1.250.200 2.450.57 3.570.110.350.030.740-.25 1.020l-2.200 2.200z" fill="#5f6b82"/></svg>
<svg class="a" style="left:417px;top:320px" width="14" height="4" viewBox="0 0 14 4" fill="#5b6780"><circle cx="2" cy="2" r="1.900"/><circle cx="7" cy="2" r="1.900"/><circle cx="12" cy="2" r="1.900"/></svg>
<div class="t" style="left:93.61px;top:17.71px;font-size:17.0px;color:#1f2333;font-weight:normal;-webkit-text-stroke:.18px;transform:scaleX(0.9896)">Новый контакт</div>
<div class="t" style="left:111.99px;top:38.05px;font-size:15.3px;color:#66728a;font-weight:normal;-webkit-text-stroke:.18px;transform:scaleX(0.9063)">10</div>
<div class="t" style="left:93.66px;top:77.71px;font-size:17.0px;color:#1f2333;font-weight:normal;-webkit-text-stroke:.18px;transform:scaleX(0.9389)">Зайцев Захар</div>
<div class="t" style="left:111.98px;top:98.05px;font-size:15.3px;color:#66728a;font-weight:normal;-webkit-text-stroke:.18px;transform:scaleX(0.9208)">107</div>
<div class="t" style="left:93.63px;top:137.71px;font-size:17.0px;color:#1f2333;font-weight:normal;-webkit-text-stroke:.18px;transform:scaleX(0.9687)">Кузнецов Кирилл</div>
<div class="t" style="left:111.98px;top:158.05px;font-size:15.3px;color:#66728a;font-weight:normal;-webkit-text-stroke:.18px;transform:scaleX(0.9208)">109</div>
<div class="t" style="left:93.65px;top:197.71px;font-size:17.0px;color:#1f2333;font-weight:normal;-webkit-text-stroke:.18px;transform:scaleX(0.9481)">Воробьёв Виктор</div>
<div class="t" style="left:111.98px;top:218.05px;font-size:15.3px;color:#66728a;font-weight:normal;-webkit-text-stroke:.18px;transform:scaleX(0.9208)">103</div>
<div class="t" style="left:93.63px;top:257.71px;font-size:17.0px;color:#1f2333;font-weight:normal;-webkit-text-stroke:.18px;transform:scaleX(0.9693)">Иванов Иван</div>
<div class="t" style="left:111.98px;top:278.05px;font-size:15.3px;color:#66728a;font-weight:normal;-webkit-text-stroke:.18px;transform:scaleX(0.9208)">108</div>
<div class="t" style="left:94.60px;top:317.71px;font-size:17.0px;color:#1f2333;font-weight:normal;-webkit-text-stroke:.18px;transform:scaleX(0.9496)">Лебедев Леонид</div>
<div class="t" style="left:111.98px;top:338.05px;font-size:15.3px;color:#66728a;font-weight:normal;-webkit-text-stroke:.18px;transform:scaleX(0.9174)">110</div></div>
<div class="a" style="left:900px;top:556px;width:460px;height:1px;background:#bcc3d4"></div>
<div class="kb" style="left:917px;top:569px;width:20.500px;height:19.500px"></div>
<div class="kb" style="left:940.500px;top:569px;width:20.500px;height:19.500px"></div>
<svg class="a" style="left:921px;top:573px" width="12" height="12" viewBox="0 0 12 12" fill="none" stroke="#66728a" stroke-width="1"><path d="M6 1.500v9M2.500 7L6 10.500 9.500 7"/></svg>
<svg class="a" style="left:944.5px;top:573px" width="12" height="12" viewBox="0 0 12 12" fill="none" stroke="#66728a" stroke-width="1"><path d="M6 10.500v-9M2.500 5L6 1.500 9.500 5"/></svg>
<div class="a" style="left:1259px;top:565px;width:85px;height:28px;border-radius:8px;background:#edeef1"></div>
<div class="a" style="left:1316.500px;top:570.500px;width:19px;height:16.500px;border:1.500px solid #fafafb;border-radius:5px"></div>
<svg class="a" style="left:1320px;top:574px" width="12" height="10" viewBox="0 0 12 10" fill="none" stroke="#b4bccb" stroke-width="1.200"><path d="M9.800 1.500v4.700H2.500M5 3.700L2.500 6.200 5 8.700"/></svg>
<div class="t" style="left:50.00px;top:5.71px;font-size:7.2px;color:#0f8a3c;font-weight:bold;-webkit-text-stroke:.55px;transform:scaleX(0.7667)">SIP</div>
<div class="t" style="left:67.98px;top:7.51px;font-size:17.0px;color:#5d6983;font-weight:normal;-webkit-text-stroke:.18px;transform:scaleX(0.9156)">Elph</div>
<div class="t" style="left:64.95px;top:53.95px;font-size:15.3px;color:#fff;font-weight:normal;-webkit-text-stroke:.42px;transform:scaleX(0.9500)">102</div>
<div class="t" style="left:64.79px;top:75.00px;font-size:13.0px;color:#fff;font-weight:normal;-webkit-text-stroke:.18px;transform:scaleX(0.9078)">Баранов Борис Вик…</div>
<div class="t" style="left:65.50px;top:92.90px;font-size:13.0px;color:#fff;font-weight:normal;-webkit-text-stroke:.18px;transform:scaleX(0.8993)">boris.baranov@testin…</div>
<div class="t" style="left:46.83px;top:151.51px;font-size:17.0px;color:#fff;font-weight:normal;-webkit-text-stroke:.18px;transform:scaleX(0.9933)">Вызовы</div>
<div class="t" style="left:46.65px;top:197.51px;font-size:17.0px;color:#fff;font-weight:normal;-webkit-text-stroke:.18px;transform:scaleX(0.9456)">Сообщения</div>
<div class="t" style="left:46.81px;top:244.41px;font-size:17.0px;color:#fff;font-weight:normal;-webkit-text-stroke:.18px;transform:scaleX(0.9864)">Настройки</div>
<div class="t" style="left:42.14px;top:484.85px;font-size:15.3px;color:#fff;font-weight:normal;-webkit-text-stroke:.18px;transform:scaleX(0.9430)">Поддержка</div>
<div class="t" style="left:42.65px;top:526.95px;font-size:15.3px;color:#fff;font-weight:normal;-webkit-text-stroke:.18px;transform:scaleX(0.9455)">Выйти</div>
<div class="t" style="left:44.50px;top:573.95px;font-size:15.3px;color:#fff;font-weight:normal;-webkit-text-stroke:.42px;transform:scaleX(0.9119)">Свернуть</div>
<div class="t" style="left:216.31px;top:48.05px;font-size:15.3px;color:#2759c7;font-weight:normal;-webkit-text-stroke:.42px;transform:scaleX(0.9870)">Вызовы</div>
<div class="t" style="left:306.30px;top:48.05px;font-size:15.3px;color:#5f6368;font-weight:normal;-webkit-text-stroke:.42px;transform:scaleX(0.9236)">Журнал</div>
<div class="t" style="left:705.86px;top:102.95px;font-size:15.3px;color:#fff;font-weight:normal;-webkit-text-stroke:.42px;transform:scaleX(0.9342)">Создать конференцию</div>
<div class="t" style="left:358.90px;top:406.46px;font-size:20.6px;color:#202432;font-weight:normal;-webkit-text-stroke:.62px;transform:scaleX(1.0030)">Нет активных вызовов и конференций</div>
<div class="t" style="left:322.87px;top:438.15px;font-size:15.3px;color:#2b303b;font-weight:normal;-webkit-text-stroke:.18px;transform:scaleX(0.9349)">Перетащите сюда контакт или вызовите его через правую панель.</div>
<div class="t" style="left:929.60px;top:47.85px;font-size:15.3px;color:#5a6780;font-weight:normal;-webkit-text-stroke:.42px;transform:scaleX(0.9369)">Адресная книга</div>
<div class="t" style="left:1091.86px;top:47.85px;font-size:15.3px;color:#5a6780;font-weight:normal;-webkit-text-stroke:.42px;transform:scaleX(0.9427)">Быстрый набор</div>
<div class="t" style="left:1253.87px;top:47.85px;font-size:15.3px;color:#5a6780;font-weight:normal;-webkit-text-stroke:.42px;transform:scaleX(0.9889)">Вызовы</div>
<div class="t" style="left:1319.60px;top:51.22px;font-size:11.2px;color:#22252b;font-weight:bold;transform:scaleX(1.1333)">0</div>
<div class="t" style="left:981.02px;top:101.05px;font-size:15.3px;color:#5a6780;font-weight:normal;-webkit-text-stroke:.42px;transform:scaleX(0.9645)">Все контакты</div>
<div class="t" style="left:1202.05px;top:101.05px;font-size:15.3px;color:#5a6780;font-weight:normal;-webkit-text-stroke:.42px;transform:scaleX(0.9494)">Избранные</div>
<div class="t" style="left:923.61px;top:131.42px;font-size:11.2px;color:#85888f;font-weight:normal;-webkit-text-stroke:.18px;transform:scaleX(0.9933)">Поиск</div>
<div class="t" style="left:924.33px;top:143.85px;font-size:15.3px;color:#22252b;font-weight:normal;-webkit-text-stroke:.18px;transform:scaleX(0.8750)">10</div>
<div class="t" style="left:1230.32px;top:139.79px;font-size:11.0px;color:#66728a;font-weight:normal;-webkit-text-stroke:.18px;transform:scaleX(0.8474)">CTRL K</div>
<div class="t" style="left:943.35px;top:185.05px;font-size:15.3px;color:#1e2230;font-weight:normal;-webkit-text-stroke:.62px;transform:scaleX(0.9500)">Подробнее</div>
<div class="t" style="left:964.51px;top:572.77px;font-size:12.2px;color:#66728a;font-weight:normal;-webkit-text-stroke:.5px;transform:scaleX(0.9864)">Навигация</div>
<div class="t" style="left:1265.78px;top:570.85px;font-size:15.3px;color:#b4bccb;font-weight:normal;-webkit-text-stroke:.18px;transform:scaleX(1.0047)">Вызов</div>
</body>
</html>
